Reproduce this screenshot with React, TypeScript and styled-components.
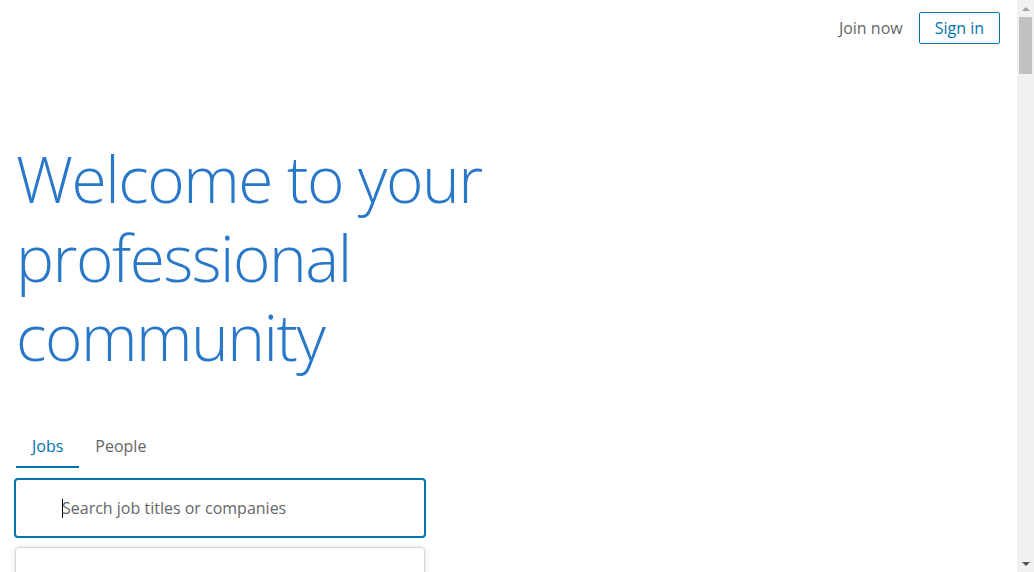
import { FC } from "react";
import styled, { createGlobalStyle } from "styled-components";

const GlobalStyle = createGlobalStyle`
  html, body {
    margin: 0;
    padding: 0;
    background: #fff;
    overflow: hidden;
  }
  body {
    font-family: "Open Sans", "Noto Sans", "Liberation Sans", sans-serif;
  }
`;

const App: FC = () => {
  return (
    <>
      <GlobalStyle />
      <StPage>
        <StHeader>
          <StJoin>Join now</StJoin>
          <StSignIn>Sign in</StSignIn>
        </StHeader>
        <StMain>
          <StHeadline>
            Welcome to your
            <br />
            professional
            <br />
            community
          </StHeadline>
          <StTabs>
            <StTab active>Jobs</StTab>
            <StTab>People</StTab>
          </StTabs>
          <StSearchField>
            <StCaret />
            <StPlaceholder>Search job titles or companies</StPlaceholder>
          </StSearchField>
          <StSuggest>
            <StSuggestText>Find all jobs in all locations</StSuggestText>
          </StSuggest>
        </StMain>
      </StPage>
      <StScrollbar>
        <StArrow>
          <StTriangle up />
        </StArrow>
        <StTrack>
          <StThumb />
        </StTrack>
        <StArrow>
          <StTriangle />
        </StArrow>
      </StScrollbar>
    </>
  );
};

export default App;

const StPage = styled.div`
  min-height: 700px;
  margin-right: 17px;
`;
const StHeader = styled.header`
  display: flex;
  justify-content: flex-end;
  align-items: center;
  gap: 16px;
  padding: 12px 17px 0 0;
  height: 32px;
`;
const StJoin = styled.a`
  font-size: 16px;
  color: #666;
`;
const StSignIn = styled.button`
  height: 32px;
  padding: 0 15px;
  border: 1px solid #0073b1;
  border-radius: 2px;
  background: #fff;
  color: #0073b1;
  font-family: inherit;
  font-size: 16px;
`;
const StMain = styled.main`
  padding: 0 16px;
  width: 412px;
`;
const StHeadline = styled.h1`
  margin: 95px 0 0;
  font-size: 64px;
  line-height: 79px;
  font-weight: 300;
  color: #2977c9;
  white-space: nowrap;
  letter-spacing: -1.5px;
`;
const StTabs = styled.ul`
  display: flex;
  list-style: none;
  margin: 46px 0 0;
  padding: 0;
`;
const StTab = styled.li<{ active?: boolean }>`
  padding: 13px 16px 9px;
  font-size: 16px;
  color: ${(p) => (p.active ? "#0073b1" : "#666")};
  border-bottom: 2px solid ${(p) => (p.active ? "#0073b1" : "transparent")};
`;
const StSearchField = styled.div`
  box-sizing: border-box;
  display: flex;
  align-items: center;
  width: 412px;
  margin: 10px 0 0 -2px;
  height: 60px;
  padding-left: 46px;
  border: 2px solid #0073b1;
  border-radius: 4px;
  font-size: 16px;
  color: #666;
`;
const StCaret = styled.span`
  width: 1px;
  height: 19px;
  background: #000;
`;
const StPlaceholder = styled.span`
  margin-left: -1px;
`;
const StSuggest = styled.div`
  box-sizing: border-box;
  width: 410px;
  margin: 9px 0 0 -1px;
  height: 60px;
  border: 1px solid #d6d6d6;
  border-radius: 4px;
  box-shadow: 0 0 6px rgba(0, 0, 0, 0.12);
  padding: 19px 0 0 46px;
  font-size: 16px;
  color: #666;
`;
const StSuggestText = styled.span``;

const StScrollbar = styled.div`
  position: fixed;
  top: 0;
  right: 0;
  width: 17px;
  height: 100vh;
  display: flex;
  flex-direction: column;
  background: #f1f1f1;
`;
const StArrow = styled.div`
  height: 17px;
  display: flex;
  align-items: center;
  justify-content: center;
`;
const StTriangle = styled.span<{ up?: boolean }>`
  width: 0;
  height: 0;
  border-left: 4px solid transparent;
  border-right: 4px solid transparent;
  ${(p) =>
    p.up
      ? "border-bottom: 4px solid #a3a3a3;"
      : "border-top: 4px solid #505050;"}
`;
const StTrack = styled.div`
  flex: 1;
  padding: 0 2px;
`;
const StThumb = styled.div`
  height: 57px;
  background: #c1c1c1;
`;
